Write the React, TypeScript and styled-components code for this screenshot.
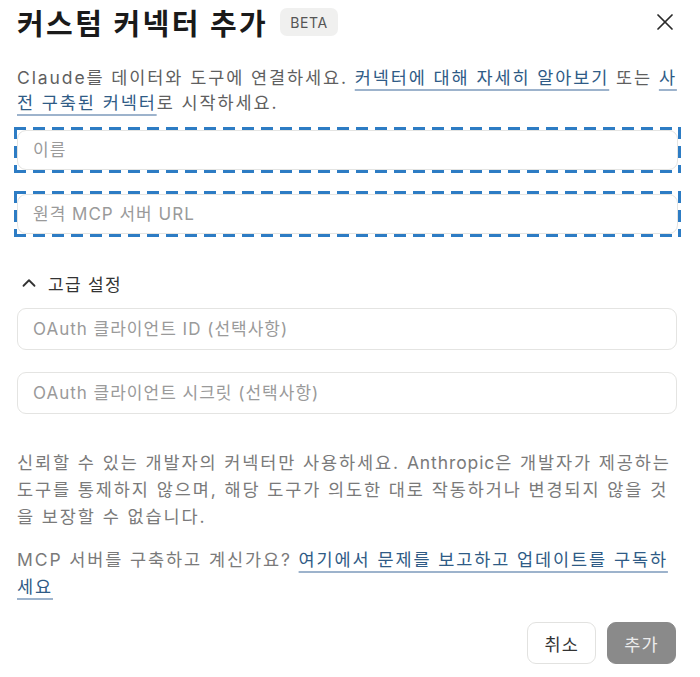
import styled, { createGlobalStyle } from 'styled-components';
import { X, ChevronUp } from 'lucide-react';

const Global = createGlobalStyle`
  body {
    margin: 0;
    background: #fff;
    font-family: "Inter", "Noto Sans CJK KR", sans-serif;
    color: #333;
  }
`;

const Dialog = styled.div`
  width: 700px;
  box-sizing: border-box;
  padding: 0 23px 0 17px;
  display: flex;
  flex-direction: column;
`;

const Header = styled.div`
  display: flex;
  align-items: center;
  height: 44px;
`;

const Title = styled.h1`
  margin: 0;
  font-size: 29px;
  font-weight: 700;
  color: #1a1a1a;
  letter-spacing: 2.4px;
`;

const Badge = styled.span`
  margin-left: 12px;
  height: 28px;
  padding: 0 10px;
  display: flex;
  align-items: center;
  background: #f0f0ef;
  border-radius: 7px;
  font-size: 14px;
  color: #555;
  letter-spacing: 0.6px;
`;

const Close = styled.button`
  margin-left: auto;
  margin-right: -2px;
  background: none;
  border: none;
  padding: 0;
  display: flex;
  color: #2a2a2a;
  cursor: pointer;
`;

const Text = styled.p<{ $top: number; $lh: number }>`
  margin: ${p => p.$top}px 0 0;
  font-size: 17.5px;
  letter-spacing: 1.9px;
  line-height: ${p => p.$lh}px;
  color: ${p => (p.$lh > 25 ? '#7a7a7a' : '#5f5f5f')};
`;

const Latin = styled.span`
  letter-spacing: 0.9px;
`;

const Link = styled.a`
  color: #2f5b86;
  text-decoration: underline;
  text-decoration-color: #9db3cc;
  text-underline-offset: 5px;
  text-decoration-thickness: 1.5px;
`;

const Fields = styled.div<{ $top: number; $gap: number }>`
  margin-top: ${p => p.$top}px;
  display: flex;
  flex-direction: column;
  gap: ${p => p.$gap}px;
`;

// dashed focus ring drawn with gradients so the dash length matches
const FocusRing = styled.div`
  --dash: #2d7cc4;
  margin-left: -3px;
  width: 667px;
  padding: 3px;
  box-sizing: border-box;
  display: flex;
  background:
    repeating-linear-gradient(90deg, var(--dash) 0 12px, transparent 12px 19px) top left / 100% 3px no-repeat,
    repeating-linear-gradient(90deg, var(--dash) 0 12px, transparent 12px 19px) bottom left / 100% 3px no-repeat,
    repeating-linear-gradient(180deg, var(--dash) 0 12px, transparent 12px 19px) top left / 3px 100% no-repeat,
    repeating-linear-gradient(180deg, var(--dash) 0 12px, transparent 12px 19px) top right / 3px 100% no-repeat;
`;

const Input = styled.input<{ $h: number }>`
  box-sizing: border-box;
  width: 100%;
  height: ${p => p.$h}px;
  border: 1px solid #e4e4e2;
  border-radius: 9px;
  padding: 0 15px;
  font-family: inherit;
  font-size: 17px;
  letter-spacing: 1px;
  color: #333;
  background: #fff;
  outline: none;

  &::placeholder {
    color: #9a9a9a;
  }
`;

const Toggle = styled.div`
  margin-top: 34px;
  height: 24px;
  display: flex;
  align-items: center;
  gap: 8px;
  padding-left: 1px;
  font-size: 17px;
  letter-spacing: 1.3px;
  color: #333;
`;

const Actions = styled.div`
  margin-top: 22px;
  margin-right: 1px;
  display: flex;
  justify-content: flex-end;
  gap: 11px;
`;

const Button = styled.button<{ $primary?: boolean }>`
  height: 42px;
  padding: 0 16px;
  border-radius: 9px;
  font-family: inherit;
  font-size: 17.5px;
  letter-spacing: 1.3px;
  border: 1px solid ${p => (p.$primary ? '#8a8a8a' : '#e2e2e0')};
  background: ${p => (p.$primary ? '#8a8a8a' : '#fff')};
  color: ${p => (p.$primary ? '#ececec' : '#333')};
`;

const App = () => (
  <Dialog>
    <Global />
    <Header>
      <Title>커스텀 커넥터 추가</Title>
      <Badge>BETA</Badge>
      <Close aria-label="닫기">
        <X size={28} strokeWidth={1.5} />
      </Close>
    </Header>
    <Text $top={21} $lh={25}>
      Claude를 데이터와 도구에 연결하세요. <Link>커넥터에 대해 자세히 알아보기</Link> 또는{' '}
      <Link>사전 구축된 커넥터</Link>로 시작하세요.
    </Text>
    <Fields $top={12} $gap={18}>
      <FocusRing>
        <Input $h={40} placeholder="이름" />
      </FocusRing>
      <FocusRing>
        <Input $h={40} placeholder="원격 MCP 서버 URL" />
      </FocusRing>
    </Fields>
    <Toggle>
      <ChevronUp size={22} strokeWidth={2} />
      고급 설정
    </Toggle>
    <Fields $top={13} $gap={22}>
      <Input $h={42} placeholder="OAuth 클라이언트 ID (선택사항)" />
      <Input $h={42} placeholder="OAuth 클라이언트 시크릿 (선택사항)" />
    </Fields>
    <Text $top={35} $lh={27}>
      신뢰할 수 있는 개발자의 커넥터만 사용하세요. <Latin>Anthropic</Latin>은 개발자가 제공하는 도구를 통제하지
      않으며, 해당 도구가 의도한 대로 작동하거나 변경되지 않을 것을 보장할 수 없습니다.
    </Text>
    <Text $top={16} $lh={27}>
      MCP 서버를 구축하고 계신가요? <Link>여기에서 문제를 보고하고 업데이트를 구독하세요</Link>
    </Text>
    <Actions>
      <Button>취소</Button>
      <Button $primary>추가</Button>
    </Actions>
  </Dialog>
);

export default App;
